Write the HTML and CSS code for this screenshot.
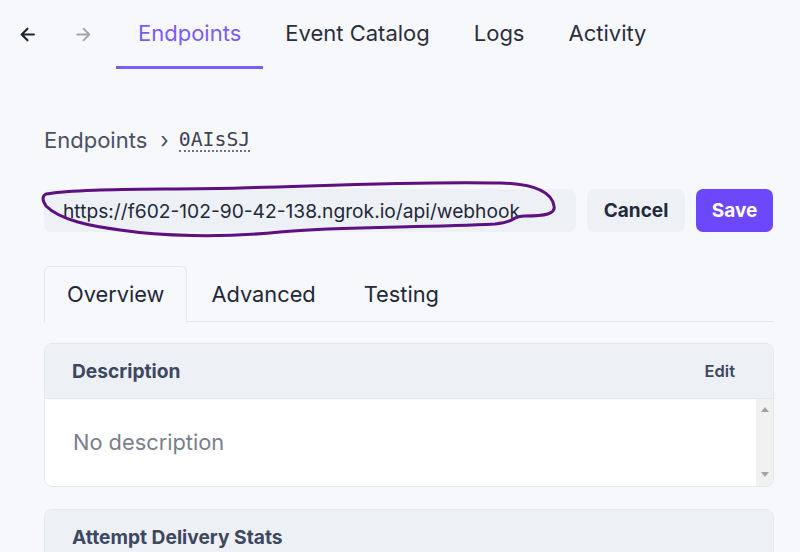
FILE: index.html
```html
<!DOCTYPE html>
<html>
<head>
<meta charset="utf-8">
<link rel="stylesheet" href="styles.css">
</head>
<body>
<div class="page">
  <nav class="topnav">
    <div class="arrows">
      <span class="arrow back"><svg width="17" height="17" viewBox="0 0 16 16"><path d="M14 8H2.5M8 2.5L2.5 8 8 13.5" fill="none" stroke="currentColor" stroke-width="2" stroke-linecap="round" stroke-linejoin="round"/></svg></span>
      <span class="arrow fwd"><svg width="17" height="17" viewBox="0 0 16 16"><path d="M2 8h11.5M8 2.5L13.5 8 8 13.5" fill="none" stroke="currentColor" stroke-width="1.7" stroke-linecap="round" stroke-linejoin="round"/></svg></span>
    </div>
    <a class="navtab active">Endpoints</a>
    <a class="navtab">Event Catalog</a>
    <a class="navtab">Logs</a>
    <a class="navtab">Activity</a>
  </nav>

  <main class="content">
    <div class="crumbs">
      <span class="crumb">Endpoints</span>
      <span class="sep">›</span>
      <span class="crumb-id">0AIsSJ</span>
    </div>

    <div class="urlrow">
      <div class="urlwrap">
        <div class="urlinput">https://f602-102-90-42-138.ngrok.io/api/webhook</div>
        <svg class="scribble" width="520" height="64" viewBox="0 0 520 64">
          <path d="M6 14 C 40 8, 120 10, 200 8 C 280 6, 380 1, 460 3 C 500 4, 512 14, 514 26 C 516 34, 505 36, 485 36 C 470 36, 478 42, 455 44 C 380 48, 300 46, 240 52 C 180 58, 120 56, 80 50 C 50 46, 20 40, 6 26 C 2 20, 2 16, 6 14 Z" fill="none" stroke="#5e0f80" stroke-width="3" stroke-linejoin="round"/>
        </svg>
      </div>
      <button class="btn cancel">Cancel</button>
      <button class="btn save">Save</button>
    </div>

    <div class="tabs">
      <div class="tab active">Overview</div>
      <div class="tab">Advanced</div>
      <div class="tab">Testing</div>
    </div>

    <section class="card">
      <header class="card-head">
        <span class="card-title">Description</span>
        <span class="edit">Edit</span>
      </header>
      <div class="card-body">
        <div class="desc">No description</div>
        <div class="scrollbar">
          <span class="tri up"></span>
          <span class="tri down"></span>
        </div>
      </div>
    </section>

    <section class="card">
      <header class="card-head">
        <span class="card-title">Attempt Delivery Stats</span>
      </header>
    </section>
  </main>
</div>
</body>
</html>
```

FILE: styles.css
```css
* { box-sizing: border-box; }
html, body { margin: 0; padding: 0; }
body {
  background: #f7f8fb;
  font-family: Inter, "Noto Sans", sans-serif;
  color: #1f2433;
  width: 800px;
  height: 552px;
  overflow: hidden;
}
.page { padding: 0; }

.topnav {
  display: flex;
  align-items: stretch;
  height: 69px;
  padding-left: 19px;
}
.arrows {
  display: flex;
  align-items: center;
  gap: 39px;
  margin-right: 24px;
  padding-bottom: 0;
}
.arrow { display: flex; width: 17px; height: 17px; }
.arrow.back { color: #1f2433; }
.arrow.fwd { color: #a0a4ad; }
.navtab {
  display: flex;
  align-items: center;
  padding: 0 22px 0;
  font-size: 22px;
  color: #2b2f3d;
  border-bottom: 3px solid transparent;
}
.navtab.active {
  color: #7a5cfa;
  border-bottom-color: #7a5cfa;
}

.content {
  padding: 56px 26px 0 44px;
}
.crumbs {
  display: flex;
  align-items: center;
  height: 30px;
  font-size: 22px;
  color: #4a5164;
}
.sep { margin: 0 10px 0 13px; font-size: 22px; color: #4a5164; }
.crumb-id {
  font-family: "DejaVu Sans Mono", monospace;
  font-size: 19.8px;
  color: #3d4356;
  border-bottom: 2px dotted #6b7184;
  line-height: 20px;
  padding-top: 2px;
}

.urlrow {
  display: flex;
  gap: 11px;
  margin-top: 34px;
  height: 43px;
}
.urlwrap { position: relative; width: 532px; }
.urlinput {
  height: 43px;
  background: #edf1f5;
  border-radius: 7px;
  display: flex;
  align-items: center;
  padding-left: 19px;
  font-size: 19.2px;
  color: #23283a;
}
.scribble {
  position: absolute;
  left: -4px;
  top: -9px;
  pointer-events: none;
}
.btn {
  border: 0;
  border-radius: 7px;
  font-family: Inter, sans-serif;
  font-size: 19px;
  font-weight: 700;
  padding: 0;
}
.cancel { width: 98px; background: #edf1f5; color: #23283a; }
.save { width: 77px; background: #6c47fc; color: #ffffff; }

.tabs {
  display: flex;
  margin-top: 34px;
  height: 56px;
  border-bottom: 1px solid #e3e7ee;
}
.tab {
  display: flex;
  align-items: center;
  padding: 0 22px 2px;
  font-size: 21.8px;
  color: #23283a;
  border: 1px solid transparent;
  border-bottom: 0;
  border-radius: 6px 6px 0 0;
  margin-bottom: -1px;
}
.tab.active {
  border-color: #e3e7ee;
  background: #f7f8fb;
  height: 57px;
}
.tab + .tab { padding: 0 23px 2px; }

.card {
  margin-top: 21px;
  border: 1px solid #e3e7ee;
  border-radius: 8px;
  overflow: hidden;
  background: #ffffff;
}
.card-head {
  background: #edf1f6;
  height: 55px;
  display: flex;
  align-items: center;
  justify-content: space-between;
  padding: 0 38px 0 27px;
  border-bottom: 1px solid #e3e7ee;
}
.card-title { font-size: 19.2px; font-weight: 700; color: #3e4760; }
.edit { font-size: 16.5px; font-weight: 600; color: #3e4760; }
.card-body {
  display: flex;
  height: 87px;
}
.desc {
  flex: 1;
  display: flex;
  align-items: center;
  padding-left: 28px;
  font-size: 21.8px;
  color: #7a7f8c;
  padding-bottom: 2px;
}
.scrollbar {
  width: 17px;
  background: #f1f1f1;
  display: flex;
  flex-direction: column;
  justify-content: space-between;
  align-items: center;
  padding: 8px 0 9px;
}
.tri { width: 0; height: 0; border-left: 4px solid transparent; border-right: 4px solid transparent; }
.tri.up { border-bottom: 5px solid #a3a3a3; }
.tri.down { border-top: 5px solid #a3a3a3; }
.card + .card { margin-top: 22px; }
```
